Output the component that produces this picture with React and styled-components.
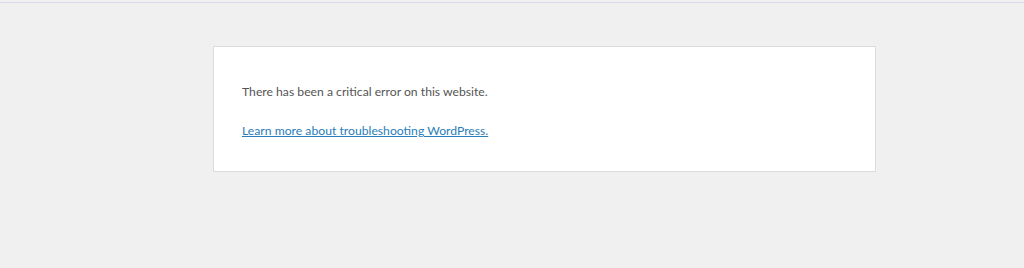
import React from "react";
import styled, { createGlobalStyle } from "styled-components";

const Global = createGlobalStyle`
  html, body { margin: 0; padding: 0; background: #f0f0f0; }
  body { font-family: Lato, "Open Sans", sans-serif; }
`;

const Page = styled.div`
  min-height: 268px;
  padding-top: 2px;
  background: #f0f0f0;
`;

const TopRule = styled.div`
  height: 1px;
  background: #d9d9ea;
`;

const Card = styled.div`
  box-sizing: border-box;
  width: 663px;
  margin: 43px 0 0 213px;
  background: #fff;
  border: 1px solid #dcdcdc;
  padding: 36px 28px 31px;
  font-size: 12.2px;
  line-height: 18px;
  color: #555;
`;

const Para = styled.p`
  margin: 0;
  & + & { margin-top: 21px; }
`;

const Link = styled.a`
  color: #2a7db8;
  text-decoration: underline;
`;

export default function App() {
  return (
    <>
      <Global />
      <Page>
        <TopRule />
        <Card>
          <Para>There has been a critical error on this website.</Para>
          <Para>
            <Link href="#">Learn more about troubleshooting WordPress.</Link>
          </Para>
        </Card>
      </Page>
    </>
  );
}
